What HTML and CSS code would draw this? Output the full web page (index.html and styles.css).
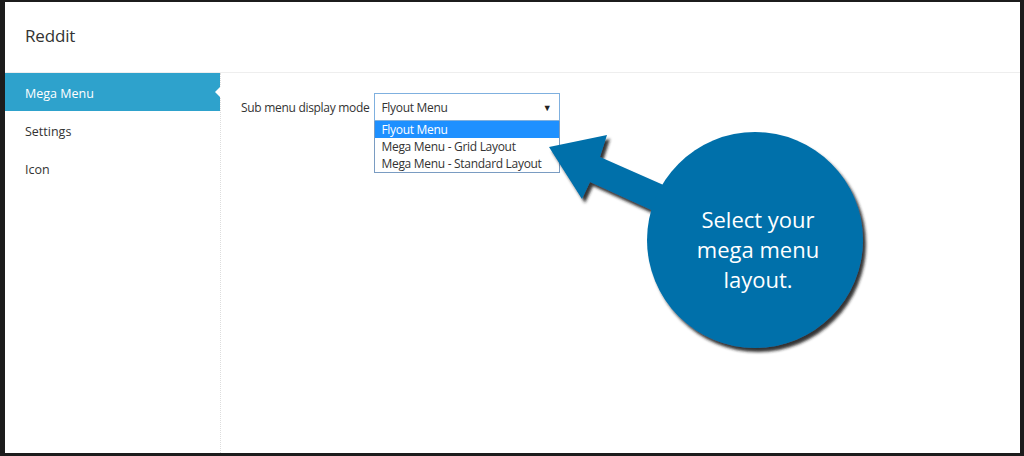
FILE: index.html
```html
<!DOCTYPE html>
<html lang="en">
  <head>
    <meta charset="UTF-8" />
    <title>Reddit - Mega Menu</title>
    <link rel="stylesheet" href="styles.css">
  </head>
  <body>
    <div class="frame">
      <header class="header">
        <h1 class="header__title">Reddit</h1>
      </header>
      <div class="panel">
        <nav class="tabs">
          <a class="tabs__item is_active">Mega Menu</a>
          <a class="tabs__item">Settings</a>
          <a class="tabs__item">Icon</a>
        </nav>
        <main class="content">
          <div class="field">
            <label class="field__label">Sub menu display mode</label>
            <div class="select">
              <div class="select__box">
                <span>Flyout Menu</span>
                <span class="select__caret">&#9660;</span>
              </div>
              <ul class="select__list">
                <li class="select__option is_selected">Flyout Menu</li>
                <li class="select__option">Mega Menu - Grid Layout</li>
                <li class="select__option">Mega Menu - Standard Layout</li>
              </ul>
            </div>
          </div>
        </main>
      </div>
    </div>

    <!-- callout -->
    <svg class="callout" width="1024" height="456" viewBox="0 0 1024 456">
      <defs>
        <filter id="shadow" x="-20%" y="-20%" width="140%" height="140%">
          <feDropShadow dx="3" dy="4" stdDeviation="1.6" flood-color="#1a1a1a" flood-opacity="0.9" />
        </filter>
      </defs>
      <g filter="url(#shadow)" fill="#0070aa">
        <polygon points="549,147 607,135 600,157 668,187 660,214 590,182 582,199" />
        <circle cx="755" cy="240" r="108" />
      </g>
      <text class="callout__text" x="758" y="228">Select your</text>
      <text class="callout__text" x="758" y="258">mega menu</text>
      <text class="callout__text" x="758" y="288">layout.</text>
    </svg>
  </body>
</html>
```

FILE: styles.css
```css
:root {
  --color-text: #333;
  --color-blue: #2ea2cc;
  --color-line: #eee;
  font-family: 'Open Sans', 'Noto Sans', sans-serif;
  color: var(--color-text);
}
* {
  margin: 0;
  padding: 0;
  box-sizing: border-box;
}
body {
  width: 1024px;
  height: 456px;
  overflow: hidden;
  background-color: #1c1c1c;
  position: relative;
}
.frame {
  height: 451px;
  margin: 2px 4px 3px 5px;
  background-color: #fff;
  display: flex;
  flex-direction: column;
}
/* header */
.header {
  height: 71px;
  border-bottom: 1px solid var(--color-line);
  padding: 22px 20px 0;
}
.header__title {
  font-size: 17px;
  font-weight: 400;
  letter-spacing: -0.01em;
}
/* tabs */
.panel {
  flex: 1;
  display: flex;
}
.tabs {
  width: 216px;
  border-right: 1px dotted #ddd;
}
.tabs__item {
  display: block;
  height: 38px;
  line-height: 34px;
  padding: 4px 0 0 20px;
  font-size: 12.5px;
  position: relative;
}
.tabs__item.is_active {
  background-color: var(--color-blue);
  color: #fff;
}
.tabs__item.is_active::after {
  content: '';
  position: absolute;
  right: -1px;
  top: 13px;
  border: 6px solid transparent;
  border-right-color: #fff;
  border-left-width: 0;
}
/* content */
.content {
  flex: 1;
  padding: 20px 20px;
}
.field {
  display: flex;
  align-items: center;
  gap: 5px;
  font-size: 12px;
  letter-spacing: -0.3px;
}
.select {
  position: relative;
  width: 186px;
}
.select__box {
  height: 28px;
  border: 1px solid #7fb0df;
  display: flex;
  align-items: center;
  justify-content: space-between;
  padding: 0 8px 0 6px;
}
.select__caret {
  font-size: 9px;
  color: #222;
}
.select__list {
  position: absolute;
  top: 28px;
  left: 0;
  width: 186px;
  list-style: none;
  border: 1px solid #7a9cc2;
  border-top: none;
  background-color: #fff;
}
.select__option {
  height: 17px;
  line-height: 18px;
  padding-left: 6px;
}
.select__option.is_selected {
  background-color: #1e90ff;
  color: #fff;
}
/* callout */
.callout {
  position: absolute;
  top: 0;
  left: 0;
  pointer-events: none;
}
.callout__text {
  fill: #fff;
  font-family: 'Open Sans', sans-serif;
  font-size: 22px;
  text-anchor: middle;
}
```
